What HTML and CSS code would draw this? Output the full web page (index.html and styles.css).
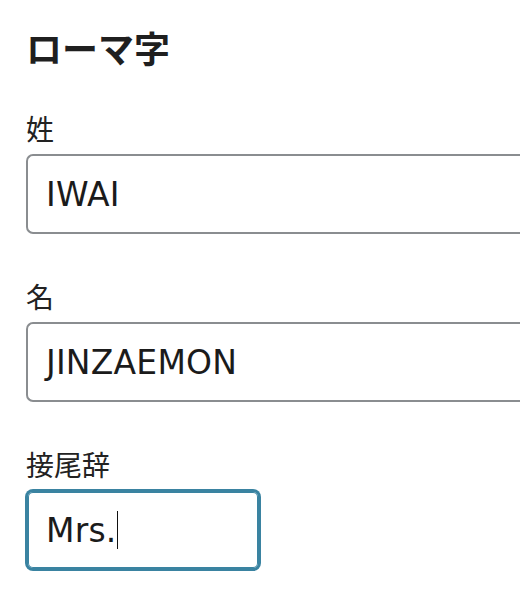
FILE: index.html
```html
<!DOCTYPE html>
<html lang="ja">
<head>
<meta charset="utf-8">
<title>ローマ字</title>
<link rel="stylesheet" href="styles.css">
</head>
<body>
<main class="page">
  <h2 class="heading">ローマ字</h2>
  <div class="field">
    <label class="label">姓</label>
    <div class="input wide">IWAI</div>
  </div>
  <div class="field">
    <label class="label">名</label>
    <div class="input wide">JINZAEMON</div>
  </div>
  <div class="field">
    <label class="label">接尾辞</label>
    <div class="input short focus">Mrs.<span class="caret"></span></div>
  </div>
</main>
</body>
</html>
```
FILE: styles.css
```css
html, body {
  margin: 0;
  padding: 0;
  background: #ffffff;
  overflow: hidden;
}
.page {
  padding: 23px 0 0 26px;
  overflow: hidden;
  font-family: "DejaVu Sans", "Noto Sans CJK JP", sans-serif;
  color: #1d1d1d;
}
.heading {
  margin: 0 0 37px 0;
  font-family: "Noto Sans CJK JP", sans-serif;
  font-size: 36px;
  line-height: 48px;
  font-weight: 700;
  color: #1f1f1f;
}
.field {
  display: flex;
  flex-direction: column;
  align-items: flex-start;
  gap: 6px;
  margin-bottom: 42px;
}
.label {
  font-family: "Noto Sans CJK JP", sans-serif;
  font-size: 28px;
  line-height: 40px;
  color: #222222;
}
.input {
  box-sizing: border-box;
  height: 80px;
  border: 2px solid #8a8d90;
  border-radius: 7px;
  padding: 0 17px 0 18px;
  display: flex;
  align-items: center;
  font-size: 33px;
  letter-spacing: 0.2px;
  color: #1b1b1b;
  background: #fff;
}
.wide {
  width: 494px;
  border-right: none;
  border-top-right-radius: 0;
  border-bottom-right-radius: 0;
}
.short {
  width: 234px;
}
.focus {
  border-color: #3a83a1;
  box-shadow: 0 0 0 1px #3a83a1, inset 0 0 0 1px #3a83a1;
}
.caret {
  display: inline-block;
  width: 1px;
  height: 38px;
  background: #111;
  margin-left: 0;
}
```
